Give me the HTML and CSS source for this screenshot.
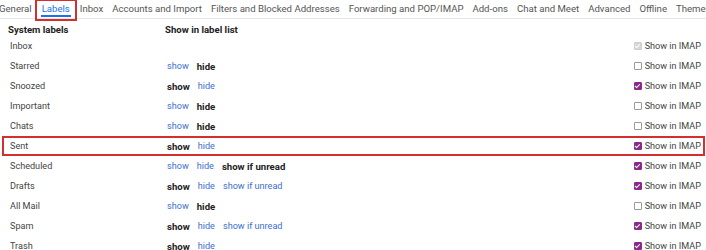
FILE: index.html
```html
<!DOCTYPE html>
<html>
<head>
<meta charset="utf-8">
<link rel="stylesheet" href="styles.css">
</head>
<body>
<div class="tabs">
  <span class="tab">General</span>
  <span class="tab active">Labels</span>
  <span class="tab">Inbox</span>
  <span class="tab">Accounts and Import</span>
  <span class="tab">Filters and Blocked Addresses</span>
  <span class="tab">Forwarding and POP/IMAP</span>
  <span class="tab">Add-ons</span>
  <span class="tab">Chat and Meet</span>
  <span class="tab">Advanced</span>
  <span class="tab">Offline</span>
  <span class="tab">Themes</span>
</div>
<div class="table">
  <div class="row head">
    <div class="name">System labels</div>
    <div class="vis">Show in label list</div>
    <div class="imap"></div>
  </div>
  <div class="row">
    <div class="name">Inbox</div>
    <div class="vis"></div>
    <div class="imap"><span class="cb dis"></span>Show in IMAP</div>
  </div>
  <div class="row">
    <div class="name">Starred</div>
    <div class="vis"><a class="lnk">show</a><b>hide</b></div>
    <div class="imap"><span class="cb"></span>Show in IMAP</div>
  </div>
  <div class="row">
    <div class="name">Snoozed</div>
    <div class="vis"><b>show</b><a class="lnk">hide</a></div>
    <div class="imap"><span class="cb on"></span>Show in IMAP</div>
  </div>
  <div class="row">
    <div class="name">Important</div>
    <div class="vis"><a class="lnk">show</a><b>hide</b></div>
    <div class="imap"><span class="cb"></span>Show in IMAP</div>
  </div>
  <div class="row">
    <div class="name">Chats</div>
    <div class="vis"><a class="lnk">show</a><b>hide</b></div>
    <div class="imap"><span class="cb"></span>Show in IMAP</div>
  </div>
  <div class="row marked">
    <div class="name">Sent</div>
    <div class="vis"><b>show</b><a class="lnk">hide</a></div>
    <div class="imap"><span class="cb on"></span>Show in IMAP</div>
  </div>
  <div class="row">
    <div class="name">Scheduled</div>
    <div class="vis"><a class="lnk">show</a><a class="lnk">hide</a><b>show if unread</b></div>
    <div class="imap"><span class="cb on"></span>Show in IMAP</div>
  </div>
  <div class="row">
    <div class="name">Drafts</div>
    <div class="vis"><b>show</b><a class="lnk">hide</a><a class="lnk">show if unread</a></div>
    <div class="imap"><span class="cb on"></span>Show in IMAP</div>
  </div>
  <div class="row">
    <div class="name">All Mail</div>
    <div class="vis"><a class="lnk">show</a><b>hide</b></div>
    <div class="imap"><span class="cb"></span>Show in IMAP</div>
  </div>
  <div class="row">
    <div class="name">Spam</div>
    <div class="vis"><b>show</b><a class="lnk">hide</a><a class="lnk">show if unread</a></div>
    <div class="imap"><span class="cb on"></span>Show in IMAP</div>
  </div>
  <div class="row">
    <div class="name">Trash</div>
    <div class="vis"><b>show</b><a class="lnk">hide</a></div>
    <div class="imap"><span class="cb on"></span>Show in IMAP</div>
  </div>
</div>
</body>
</html>
```

FILE: styles.css
```css
html, body {
  margin: 0;
  padding: 0;
  background: #fff;
  overflow: hidden;
}
body {
  font-family: Roboto, "Liberation Sans", Arial, sans-serif;
  font-size: 9.1px;
  color: #444;
}
.tabs {
  display: flex;
  gap: 9px;
  height: 18px;
  border-bottom: 1px solid #e6e6e6;
  margin-left: -1px;
  white-space: nowrap;
  font-family: Roboto, "Liberation Sans", sans-serif;
  font-size: 9.6px;
  color: #555;
}
.tab {
  line-height: 18px;
  position: relative;
}
.tab.active {
  color: #1a73e8;
  margin: 0 1px;
}
.tab.active::before {
  content: "";
  position: absolute;
  left: -1px;
  right: -1px;
  bottom: 1px;
  height: 2px;
  background: #1a73e8;
}
.tab.active::after {
  content: "";
  position: absolute;
  left: -7px;
  right: -7px;
  top: -1px;
  bottom: -3px;
  border: 2px solid #d32f2f;
}
.table {
  margin: 0 1px 0 2px;
}
.row {
  display: grid;
  grid-template-columns: 165px 1fr auto;
  height: 20px;
  align-items: center;
}
.row.head {
  height: 17px;
  align-items: end;
  line-height: 12px;
  font-size: 9.6px;
  font-weight: bold;
  color: #222;
}
.row.head .name {
  padding-left: 6px;
}
.row.head .vis {
  margin-left: -2px;
}
.name {
  padding-left: 8px;
}
.vis {
  display: flex;
  gap: 8px;
  white-space: nowrap;
}
.vis b {
  color: #222;
  font-size: 9.6px;
}
.lnk {
  color: #3b6fd0;
}
.imap {
  display: flex;
  align-items: center;
  gap: 3px;
  padding-right: 4px;
  white-space: nowrap;
}
.row.marked {
  box-shadow: inset 0 0 0 2px #d32f2f;
}
.cb {
  width: 6px;
  height: 6px;
  border: 1px solid #999;
  border-radius: 1px;
  background: #fff;
  position: relative;
}
.cb.on {
  background: #8a2a8a;
  border-color: #8a2a8a;
}
.cb.dis {
  background: #d6d6d6;
  border-color: #cfcfcf;
}
.cb.on::after, .cb.dis::after {
  content: "";
  position: absolute;
  left: 1.5px;
  top: 0;
  width: 2px;
  height: 3.5px;
  border: solid #fff;
  border-width: 0 1px 1px 0;
  transform: rotate(45deg);
}
```
